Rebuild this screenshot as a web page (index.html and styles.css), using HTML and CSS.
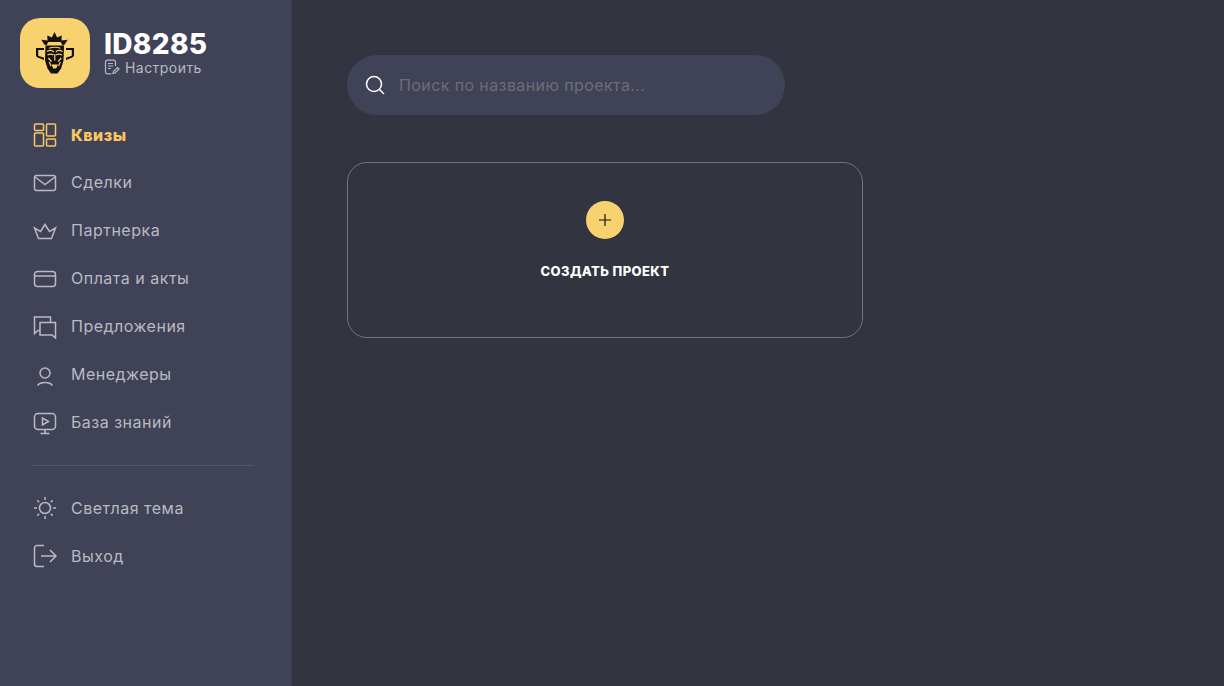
FILE: index.html
```html
<!DOCTYPE html>
<html lang="ru">
<head>
  <meta charset="UTF-8" />
  <title>Квизы</title>
  <link rel="stylesheet" href="styles.css">
</head>
<body>
  <div class="layout">
    <aside class="sidebar">
      <div class="account">
        <div class="logo">
          <svg viewBox="0 0 38 42" width="38" height="42">
            <path class="mask-fill" d="M18.500 0l2.600 5.500 4.600-2-.2 5 6.200-.8-3.200 5-2 .6-1.800-3.300H12.300l-1.800 3.300-2-.6-3.200-5 6.200.8-.2-5 4.600 2z"/>
            <path class="mask-fill" d="M0 16h8v2H2.200v5.800L8 25.800V28l-6.400-2.400L0 24zM38 16h-8v2h5.800v5.800L30 25.800V28l6.400-2.400L38 24z"/>
            <path class="mask-fill" d="M9.500 13.500h18.500l-.5 15-2.500 8-3.500 5h-6.500l-3.500-5-2.500-8z"/>
            <path class="mask-cut" d="M13 16.300c3.500-1.300 8-1.300 11.500 0M11 19.500c2.500-1.500 5-1.500 6.800.5M19.800 20c1.800-2 4.500-2 6.800-.5M11.500 23c2-1 4.300-1 6 0M20 23c1.700-1 4-1 6 0M18.800 22v6.500M12.300 26l3.200 3.500M25.300 26l-3.200 3.500M13.300 30l1.700 4M24.300 30l-1.700 4"/>
            <path class="mask-gap" d="M15.500 32.500h6.500l-1.800 4h-3z"/>
          </svg>
        </div>
        <div class="account-info">
          <div class="account-id">ID8285</div>
          <a class="account-setup" href="#">
            <svg class="setup-icon" viewBox="0 0 16 16" width="16" height="16">
              <path d="M11.500 7V3a1.800 1.800 0 0 0-1.800-1.800H3.300A1.800 1.800 0 0 0 1.500 3v10a1.800 1.800 0 0 0 1.800 1.800h4"/>
              <path d="M4 4.500h5M4 7h5M4 9.500h3"/>
              <path d="M9 14.500l.5-2 4-4 1.500 1.500-4 4z"/>
            </svg>
            <span>Настроить</span>
          </a>
        </div>
      </div>

      <nav class="menu">
        <a class="menu-item active" href="#">
          <svg class="menu-icon" viewBox="0 0 24 24" width="24" height="24">
            <rect x="1.500" y="1" width="9" height="6.500" rx="1"/>
            <rect x="1.500" y="10" width="9" height="13" rx="1"/>
            <rect x="13.500" y="1" width="9" height="12" rx="1"/>
            <rect x="13.500" y="16" width="9" height="7" rx="1"/>
          </svg>
          <span>Квизы</span>
        </a>
        <a class="menu-item" href="#">
          <svg class="menu-icon" viewBox="0 0 24 24" width="24" height="24">
            <rect x="1.500" y="4.500" width="21" height="15" rx="2"/>
            <path d="M2 6l10 7.500L22 6"/>
          </svg>
          <span>Сделки</span>
        </a>
        <a class="menu-item" href="#">
          <svg class="menu-icon" viewBox="0 0 24 24" width="24" height="24">
            <path d="M5.500 19.500h13L22.500 9l-6 3.500L12 5.500l-4.500 7L1.500 9z"/>
          </svg>
          <span>Партнерка</span>
        </a>
        <a class="menu-item" href="#">
          <svg class="menu-icon" viewBox="0 0 24 24" width="24" height="24">
            <rect x="1.500" y="4.500" width="21" height="15" rx="3"/>
            <path d="M1.500 9h21"/>
          </svg>
          <span>Оплата и акты</span>
        </a>
        <a class="menu-item" href="#">
          <svg class="menu-icon" viewBox="0 0 24 24" width="24" height="24">
            <path d="M7 15.500H5L1.500 18.500V2h16v5.500"/>
            <path d="M7 7.500h15.500V23l-3.500-3H7z"/>
          </svg>
          <span>Предложения</span>
        </a>
        <a class="menu-item" href="#">
          <svg class="menu-icon" viewBox="0 0 24 24" width="24" height="24">
            <circle cx="12" cy="10" r="5"/>
            <path d="M4.500 22.500c2-2.500 4.500-3 7.500-3s5.500.5 7.500 3"/>
          </svg>
          <span>Менеджеры</span>
        </a>
        <a class="menu-item" href="#">
          <svg class="menu-icon" viewBox="0 0 24 24" width="24" height="24">
            <rect x="1.500" y="2.500" width="21" height="16" rx="3.500"/>
            <path d="M9.500 7v7l6-3.500zM12 18.500V22M7.500 22.500h9"/>
          </svg>
          <span>База знаний</span>
        </a>
      </nav>

      <div class="menu-divider"></div>

      <nav class="menu menu-bottom">
        <a class="menu-item" href="#">
          <svg class="menu-icon" viewBox="0 0 24 24" width="24" height="24">
            <circle cx="12" cy="12" r="5.500"/>
            <path d="M12 1v3M12 20v3M1 12h3M20 12h3M4.200 4.200l2 2M17.800 17.800l2 2M4.200 19.800l2-2M17.800 6.200l2-2"/>
          </svg>
          <span>Светлая тема</span>
        </a>
        <a class="menu-item" href="#">
          <svg class="menu-icon" viewBox="0 0 24 24" width="24" height="24">
            <path d="M11 1.500H4A2.500 2.500 0 0 0 1.500 4v16A2.500 2.500 0 0 0 4 22.500h7"/>
            <path d="M8 12h15M17 6l6 6-6 6"/>
          </svg>
          <span>Выход</span>
        </a>
      </nav>
    </aside>

    <main class="content">
      <div class="search">
        <svg class="search-icon" viewBox="0 0 20 20" width="20" height="20">
          <circle cx="9" cy="9" r="7.500"/>
          <path d="M14.500 14.500l4.500 4.500"/>
        </svg>
        <input class="search-input" type="text" placeholder="Поиск по названию проекта..." />
      </div>

      <div class="projects">
        <a class="create-card" href="#">
          <div class="create-plus">
            <svg viewBox="0 0 12 12" width="12" height="12">
              <path d="M6 0v12M0 6h12"/>
            </svg>
          </div>
          <div class="create-title">СОЗДАТЬ ПРОЕКТ</div>
        </a>
      </div>
    </main>
  </div>
</body>
</html>
```

FILE: styles.css
```css
:root {
  --bg: #323440;
  --sidebar-bg: #404258;
  --accent: #f8d26e;
  --accent-text: #fbc75f;
  --muted: #b9bac2;
}

* { box-sizing: border-box; }

html, body {
  height: 100%;
}

body {
  margin: 0;
  background-color: var(--bg);
  font-family: Inter, "Noto Sans", sans-serif;
  color: #fff;
  overflow: hidden;
}

a {
  color: inherit;
  text-decoration: none;
}

.layout {
  display: flex;
  height: 100%;
}

/* Sidebar */
.sidebar {
  width: 292px;
  flex-shrink: 0;
  padding: 18px 37px 0 33px;
  background-color: var(--sidebar-bg);
  border-right: 1px solid #393b4c;
}

.account {
  display: flex;
  align-items: center;
  gap: 14px;
  margin-left: -13px;
  margin-bottom: 23px;
}

.logo {
  width: 70px;
  height: 70px;
  display: flex;
  align-items: center;
  justify-content: center;
  background-color: var(--accent);
  border-radius: 20px;
}

.mask-fill { fill: #14110a; }

.mask-cut {
  fill: none;
  stroke: var(--accent);
  stroke-width: 1.200;
}

.mask-gap { fill: var(--accent); }

.account-info {
  display: flex;
  flex-direction: column;
  padding-bottom: 1px;
}

.account-id {
  font-size: 28px;
  line-height: 28px;
  font-weight: 800;
  letter-spacing: 0.3px;
}

.account-setup {
  display: flex;
  align-items: center;
  gap: 5px;
  margin-top: 1px;
  font-size: 14px;
  letter-spacing: 0.45px;
  color: var(--muted);
}

.setup-icon {
  fill: none;
  stroke: var(--muted);
  stroke-width: 1.200;
}

.menu-item {
  display: flex;
  align-items: center;
  gap: 13px;
  height: 48px;
  font-size: 16px;
  letter-spacing: 0.5px;
  color: var(--muted);
}

.menu-item span {
  margin-left: 1px;
  padding-bottom: 2px;
}

.menu-bottom .menu-item span,
.menu-item.active span {
  padding-bottom: 1px;
}

.menu-icon {
  flex-shrink: 0;
  fill: none;
  stroke: var(--muted);
  stroke-width: 1.500;
}

.menu-item.active {
  font-weight: 800;
  color: var(--accent-text);
}

.menu-item.active .menu-icon {
  stroke: var(--accent-text);
}

.menu-divider {
  height: 1px;
  margin: 18px 0;
  background-color: #53556c;
}

/* Main area */
.content {
  flex: 1;
  padding: 55px 0 0 55px;
}

.search {
  display: flex;
  align-items: center;
  gap: 14px;
  width: 438px;
  height: 60px;
  padding: 0 18px;
  background-color: var(--sidebar-bg);
  border-radius: 30px;
}

.search-icon {
  flex-shrink: 0;
  fill: none;
  stroke: #fff;
  stroke-width: 1.500;
}

.search-input {
  flex: 1;
  min-width: 0;
  padding: 0;
  border: none;
  outline: none;
  background: transparent;
  font-family: inherit;
  font-size: 16px;
  letter-spacing: 0.4px;
  color: #fff;
}

.search-input::placeholder {
  color: #6d6e74;
  opacity: 1;
}

.projects {
  margin-top: 47px;
}

.create-card {
  display: flex;
  flex-direction: column;
  align-items: center;
  width: 516px;
  height: 176px;
  padding-top: 38px;
  border: 1px solid #72737c;
  border-radius: 20px;
}

.create-plus {
  width: 38px;
  height: 38px;
  display: flex;
  align-items: center;
  justify-content: center;
  background-color: var(--accent);
  border-radius: 50%;
}

.create-plus svg {
  fill: none;
  stroke: #14141a;
  stroke-width: 1.200;
}

.create-title {
  margin-top: 24px;
  font-size: 13px;
  line-height: 16px;
  font-weight: 800;
  letter-spacing: 0.4px;
}
```
